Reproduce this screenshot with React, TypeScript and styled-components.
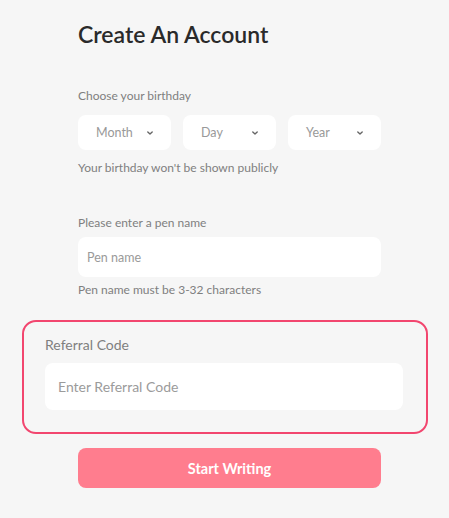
import React from "react";
import styled, { createGlobalStyle } from "styled-components";

const GlobalStyle = createGlobalStyle`
  html, body {
    margin: 0;
    padding: 0;
    background: #f6f6f6;
  }
  body {
    font-family: Lato, "Noto Sans", sans-serif;
  }
`;

const ChevronDown = () => (
  <svg width="10" height="10" viewBox="0 0 10 10" fill="none">
    <path
      d="M2.8 4 L5 6 L7.2 4"
      stroke="#666"
      strokeWidth="1.4"
      strokeLinecap="round"
      strokeLinejoin="round"
    />
  </svg>
);

const App: React.FC = () => {
  return (
    <>
      <GlobalStyle />
      <Page>
        <Section>
          <Title>Create An Account</Title>

          <Label>Choose your birthday</Label>
          <SelectRow>
            {["Month", "Day", "Year"].map((item) => (
              <Select key={item}>
                <span>{item}</span>
                <ChevronDown />
              </Select>
            ))}
          </SelectRow>
          <Hint $top={10}>Your birthday won't be shown publicly</Hint>

          <Label $top={39}>Please enter a pen name</Label>
          <Input placeholder="Pen name" />
          <Hint $top={5}>Pen name must be 3-32 characters</Hint>
        </Section>

        <ReferralBox>
          <ReferralLabel>Referral Code</ReferralLabel>
          <ReferralInput placeholder="Enter Referral Code" />
        </ReferralBox>

        <Section>
          <Button>Start Writing</Button>
        </Section>
      </Page>
    </>
  );
};

const Page = styled.main`
  width: 449px;
  height: 518px;
  padding: 0 21px 0 22px;
  box-sizing: border-box;
  display: flex;
  flex-direction: column;
`;

const Section = styled.section`
  display: flex;
  flex-direction: column;
  padding: 0 47px 0 56px;
`;

const Title = styled.h1`
  margin: 20px 0 0;
  font-size: 23px;
  line-height: 28px;
  font-weight: 600;
  color: #2a2a2a;
`;

const Label = styled.label<{ $top?: number }>`
  margin-top: ${(p) => p.$top ?? 40}px;
  font-size: 12px;
  line-height: 16px;
  color: #7f7f7f;
`;

const SelectRow = styled.div`
  display: grid;
  grid-template-columns: repeat(3, 1fr);
  gap: 12px;
  margin-top: 11px;
`;

const Select = styled.div`
  height: 35px;
  background: #fff;
  border-radius: 8px;
  display: flex;
  align-items: center;
  justify-content: space-between;
  padding: 0 16px 0 18px;
  font-size: 12.5px;
  color: #999;
`;

const Hint = styled.p<{ $top: number }>`
  margin: ${(p) => p.$top}px 0 0;
  font-size: 12px;
  line-height: 16px;
  color: #7f7f7f;
`;

const Input = styled.input`
  margin-top: 6px;
  height: 40px;
  border: none;
  border-radius: 8px;
  background: #fff;
  padding: 0 9px;
  font-family: inherit;
  font-size: 12.5px;
  outline: none;

  &::placeholder {
    color: #9a9a9a;
  }
`;

const ReferralBox = styled.div`
  margin-top: 22px;
  border: 2px solid #f2466f;
  border-radius: 14px;
  padding: 14px 23px 22px 21px;
  display: flex;
  flex-direction: column;
`;

const ReferralLabel = styled.span`
  font-size: 14px;
  line-height: 18px;
  color: #7f7f7f;
`;

const ReferralInput = styled.input`
  margin-top: 9px;
  height: 47px;
  border: none;
  border-radius: 8px;
  background: #fff;
  padding: 0 13px;
  font-family: inherit;
  font-size: 14px;
  outline: none;

  &::placeholder {
    color: #9b9b9b;
  }
`;

const Button = styled.button`
  margin-top: 14px;
  height: 40px;
  border: none;
  border-radius: 8px;
  background: #ff7d8e;
  color: #fff;
  font-family: inherit;
  font-size: 14.5px;
  font-weight: 700;
  cursor: pointer;
`;

export default App;
